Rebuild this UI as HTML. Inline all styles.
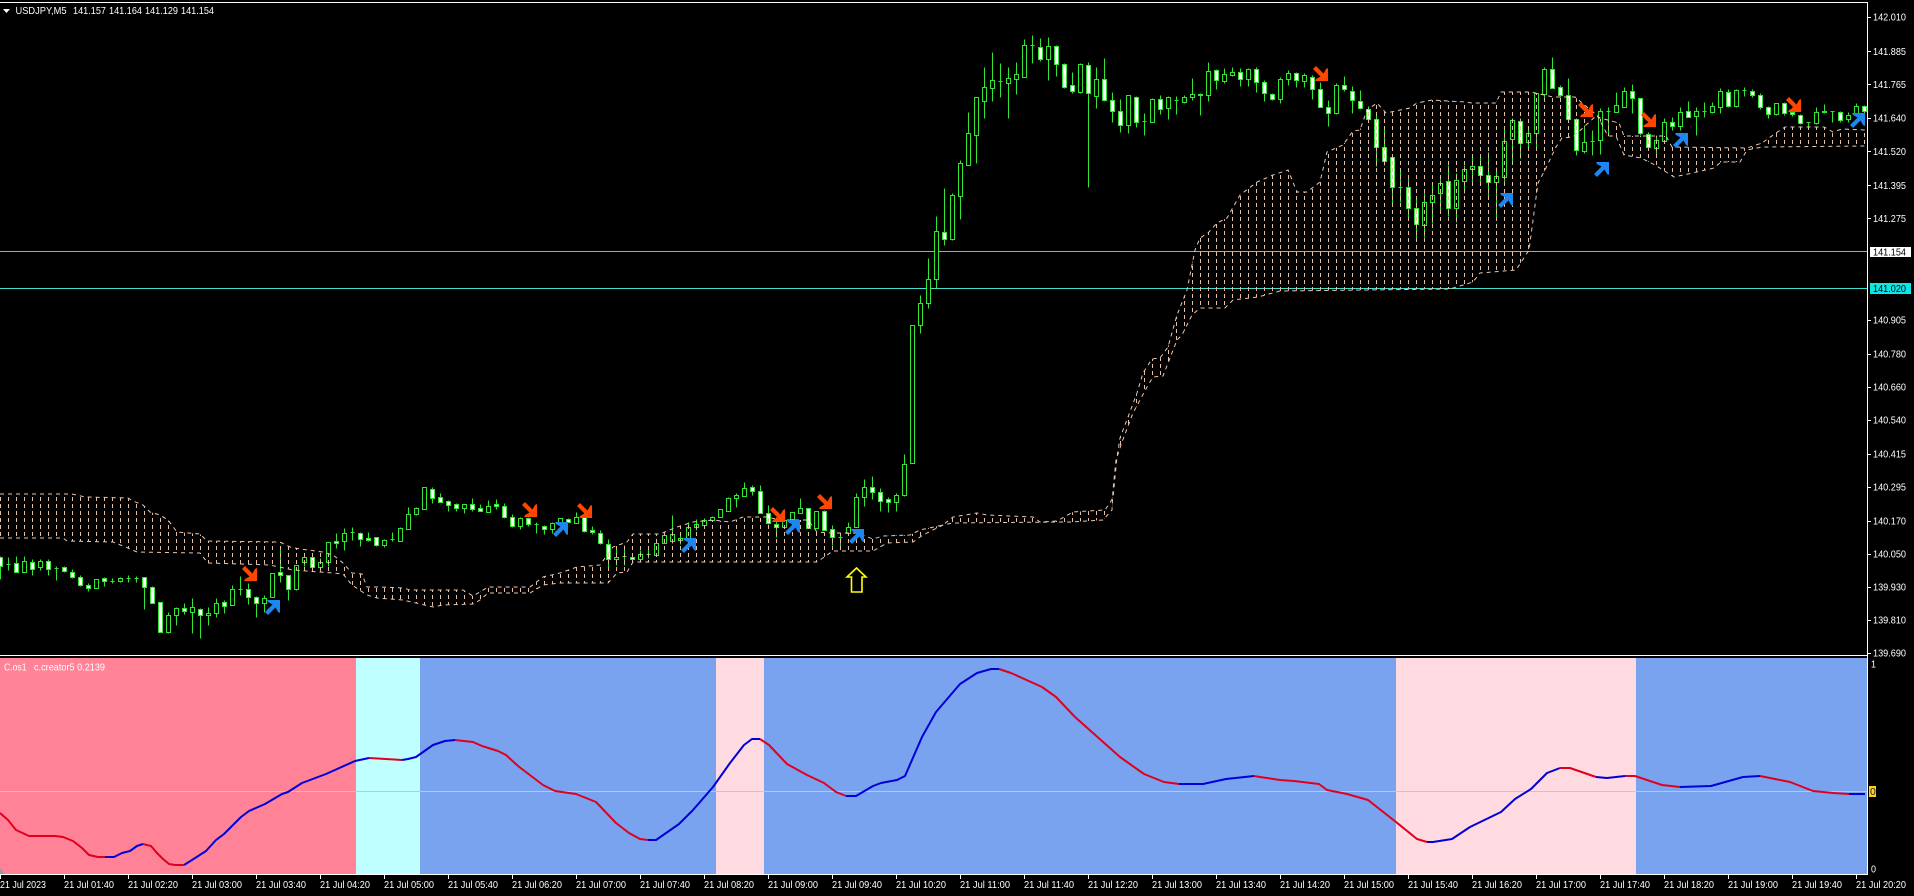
<!DOCTYPE html>
<html><head><meta charset="utf-8"><title>USDJPY,M5</title>
<style>html,body{margin:0;padding:0;background:#000;width:1914px;height:896px;overflow:hidden}svg{display:block}text{font-family:"Liberation Sans",sans-serif;font-size:10.5px;fill:#fff}</style>
</head><body>
<svg width="1914" height="896" viewBox="0 0 1914 896" xmlns="http://www.w3.org/2000/svg">
<defs>
<pattern id="v" width="8" height="7" patternUnits="userSpaceOnUse"><rect x="0" y="0" width="1" height="4" fill="#e6c0a4"/></pattern>
<polygon id="o" fill="#ff4500" points="3,0 10.5,7.5 13,3 15,2 15,15 2,15 3,13 7.5,10.5 0,3"/>
<polygon id="b" fill="#1e86f0" points="3,15 10.5,7.5 13,12 15,13 15,0 2,0 3,2 7.5,4.5 0,12"/>
</defs>
<rect width="1914" height="896" fill="#000"/>
<rect x="0" y="2" width="1868" height="1" fill="#fff"/>
<rect x="0" y="251" width="1867" height="1" fill="#a8a8a8"/>
<rect x="0" y="288" width="1867" height="1" fill="#40e0d0"/>

<g transform="translate(0 .5)">
<path fill="none" stroke="#33e533" stroke-width="1" d="M.5 556V579M8.5 557V570M6.5 564h4M16.5 556V572M24.5 556V572M32.5 559V575M40.5 559V570M48.5 559V575M56.5 566V580M54.5 568h4M64.5 566V572M72.5 569V578M80.5 575V586M88.5 583V591M96.5 579V588M104.5 577V586M112.5 578V583M110.5 581h4M120.5 577V582M128.5 575V582M126.5 578h4M136.5 576V582M134.5 578h4M144.5 577V609M152.5 586V603M160.5 602V632M168.5 612V633M176.5 607V625M184.5 603V614M192.5 598V633M200.5 608V638M208.5 607V625M216.5 598V617M224.5 600V613M232.5 585V605M240.5 576V595M238.5 589h4M248.5 583V604M256.5 596V617M264.5 595V612M272.5 573V597M280.5 548V582M288.5 575V600M296.5 565V590M304.5 553V566M312.5 556V568M320.5 558V572M328.5 542V566M336.5 533V548M344.5 528V550M352.5 527V540M350.5 532h4M360.5 532V546M368.5 532V541M376.5 537V546M384.5 539V547M392.5 532V541M390.5 539h4M400.5 527V541M408.5 507V529M416.5 507V515M424.5 487V509M432.5 487V503M440.5 493V502M448.5 500V511M456.5 503V511M464.5 504V513M472.5 498V511M480.5 504V511M488.5 500V512M496.5 499V509M504.5 503V518M512.5 514V527M520.5 517V529M528.5 517V526M536.5 522V533M534.5 524h4M544.5 525V534M552.5 522V533M560.5 518V523M568.5 518V522M576.5 512V523M584.5 512V532M592.5 526V534M600.5 530V544M608.5 539V568M616.5 548V565M624.5 545V565M622.5 556h4M632.5 556V560M640.5 550V560M648.5 546V558M646.5 554h4M656.5 543V555M664.5 533V543M672.5 515V543M680.5 535V544M688.5 522V540M696.5 519V530M704.5 518V526M712.5 516V521M720.5 509V517M728.5 497V511M736.5 493V507M744.5 482V496M752.5 485V495M760.5 485V513M768.5 505V524M776.5 517V537M784.5 518V527M792.5 512V527M800.5 498V513M808.5 508V528M816.5 511V528M824.5 510V530M832.5 525V545M840.5 533V547M838.5 537h4M848.5 522V534M856.5 493V527M864.5 479V506M872.5 476V499M880.5 488V511M888.5 497V512M896.5 493V511M904.5 454V496M912.5 325V463M920.5 295V333M928.5 258V308M936.5 216V288M944.5 188V245M952.5 193V240M960.5 160V219M968.5 112V165M976.5 97V163M984.5 67V118M992.5 52V101M1000.5 63V97M998.5 81h4M1008.5 67V118M1016.5 62V94M1024.5 39V77M1032.5 35V63M1030.5 45h4M1040.5 38V61M1048.5 37V80M1056.5 45V76M1064.5 63V88M1072.5 72V93M1080.5 63V93M1088.5 62V187M1096.5 67V108M1104.5 58V101M1112.5 92V122M1120.5 99V132M1128.5 96V133M1136.5 96V127M1144.5 113V135M1142.5 121h4M1152.5 98V122M1160.5 95V114M1168.5 96V119M1176.5 96V114M1174.5 100h4M1184.5 95V103M1192.5 78V100M1200.5 93V115M1208.5 62V101M1216.5 69V89M1224.5 68V83M1232.5 67V76M1240.5 68V86M1248.5 68V86M1256.5 67V92M1264.5 80V101M1272.5 93V100M1280.5 77V103M1288.5 70V85M1296.5 72V87M1304.5 73V87M1312.5 75V99M1320.5 82V107M1328.5 100V126M1336.5 83V114M1344.5 76V91M1352.5 86V113M1360.5 90V109M1368.5 106V120M1376.5 115V166M1384.5 129V165M1392.5 157V204M1400.5 168V202M1398.5 187h4M1408.5 175V217M1416.5 198V238M1424.5 192V237M1432.5 185V223M1440.5 175V213M1448.5 165V216M1456.5 173V222M1464.5 165V193M1472.5 157V182M1480.5 156V183M1488.5 152V198M1496.5 167V220M1504.5 128V183M1512.5 118V162M1520.5 118V158M1528.5 129V150M1536.5 93V147M1544.5 67V98M1552.5 57V88M1560.5 85V97M1568.5 78V122M1576.5 118V155M1584.5 125V153M1592.5 130V155M1590.5 141h4M1600.5 108V154M1608.5 107V133M1606.5 111h4M1616.5 92V112M1624.5 87V107M1632.5 84V113M1640.5 98V135M1648.5 132V150M1656.5 135V157M1664.5 118V141M1672.5 117V130M1680.5 107V130M1688.5 101V117M1696.5 107V135M1704.5 102V117M1702.5 111h4M1712.5 102V113M1720.5 88V113M1728.5 89V107M1736.5 89V107M1744.5 87V96M1742.5 90h4M1752.5 89V97M1760.5 93V109M1768.5 106V118M1776.5 103V115M1784.5 102V115M1792.5 107V116M1800.5 114V124M1808.5 122V126M1806.5 122h4M1816.5 107V124M1824.5 104V113M1832.5 111V122M1830.5 111h4M1840.5 111V122M1848.5 112V122M1856.5 103V115M1864.5 105V114"/>
<path fill="#000" stroke="#33e533" stroke-width="1" d="M22.5 561h4v11h-4zM38.5 561h4v6h-4zM94.5 579h4v9h-4zM118.5 578h4v3h-4zM166.5 615h4v17h-4zM174.5 608h4v7h-4zM190.5 607h4v5h-4zM206.5 613h4v2h-4zM214.5 603h4v10h-4zM230.5 589h4v16h-4zM262.5 598h4v5h-4zM270.5 573h4v24h-4zM294.5 565h4v24h-4zM302.5 557h4v5h-4zM318.5 562h4v5h-4zM326.5 542h4v20h-4zM342.5 533h4v8h-4zM382.5 540h4v5h-4zM398.5 528h4v13h-4zM406.5 514h4v15h-4zM414.5 508h4v6h-4zM422.5 487h4v22h-4zM462.5 504h4v4h-4zM486.5 506h4v6h-4zM518.5 518h4v8h-4zM550.5 523h4v6h-4zM558.5 518h4v5h-4zM574.5 517h4v6h-4zM614.5 557h4v2h-4zM638.5 554h4v5h-4zM654.5 543h4v12h-4zM662.5 535h4v8h-4zM670.5 534h4v7h-4zM678.5 538h4v2h-4zM686.5 527h4v11h-4zM694.5 524h4v3h-4zM702.5 520h4v5h-4zM710.5 517h4v3h-4zM718.5 509h4v8h-4zM726.5 498h4v13h-4zM734.5 495h4v3h-4zM742.5 488h4v8h-4zM782.5 520h4v7h-4zM790.5 512h4v7h-4zM798.5 508h4v5h-4zM814.5 511h4v17h-4zM846.5 527h4v6h-4zM854.5 497h4v30h-4zM862.5 487h4v10h-4zM894.5 495h4v7h-4zM902.5 464h4v31h-4zM910.5 325h4v138h-4zM918.5 303h4v22h-4zM926.5 279h4v24h-4zM934.5 231h4v48h-4zM950.5 195h4v44h-4zM958.5 163h4v33h-4zM966.5 133h4v32h-4zM974.5 97h4v38h-4zM982.5 87h4v14h-4zM990.5 80h4v8h-4zM1006.5 78h4v5h-4zM1014.5 74h4v5h-4zM1022.5 45h4v32h-4zM1046.5 46h4v13h-4zM1078.5 64h4v28h-4zM1094.5 79h4v17h-4zM1126.5 95h4v30h-4zM1150.5 99h4v23h-4zM1166.5 97h4v11h-4zM1182.5 97h4v5h-4zM1190.5 94h4v3h-4zM1206.5 71h4v24h-4zM1222.5 74h4v7h-4zM1230.5 72h4v3h-4zM1246.5 69h4v10h-4zM1278.5 79h4v20h-4zM1286.5 73h4v6h-4zM1302.5 75h4v6h-4zM1334.5 85h4v28h-4zM1422.5 202h4v23h-4zM1430.5 195h4v7h-4zM1438.5 183h4v10h-4zM1454.5 180h4v28h-4zM1462.5 169h4v12h-4zM1470.5 166h4v3h-4zM1494.5 176h4v6h-4zM1502.5 141h4v36h-4zM1510.5 120h4v19h-4zM1526.5 133h4v9h-4zM1534.5 93h4v40h-4zM1542.5 69h4v25h-4zM1582.5 142h4v9h-4zM1598.5 111h4v29h-4zM1614.5 105h4v7h-4zM1622.5 91h4v16h-4zM1654.5 140h4v8h-4zM1662.5 122h4v19h-4zM1678.5 112h4v14h-4zM1694.5 111h4v5h-4zM1710.5 106h4v6h-4zM1718.5 91h4v16h-4zM1734.5 90h4v16h-4zM1774.5 103h4v11h-4zM1814.5 112h4v11h-4zM1846.5 115h4v4h-4zM1854.5 106h4v8h-4z"/>
<path fill="#fff" stroke="#33e533" stroke-width="1" d="M-1.5 557h4v9h-4zM14.5 563h4v9h-4zM30.5 562h4v7h-4zM46.5 561h4v8h-4zM62.5 567h4v4h-4zM70.5 572h4v5h-4zM78.5 577h4v8h-4zM86.5 585h4v3h-4zM102.5 578h4v3h-4zM142.5 577h4v10h-4zM150.5 587h4v16h-4zM158.5 602h4v30h-4zM182.5 608h4v3h-4zM198.5 609h4v6h-4zM222.5 602h4v4h-4zM246.5 589h4v8h-4zM254.5 597h4v6h-4zM278.5 572h4v3h-4zM286.5 575h4v14h-4zM310.5 557h4v10h-4zM334.5 541h4v2h-4zM358.5 533h4v6h-4zM366.5 538h4v2h-4zM374.5 537h4v8h-4zM430.5 489h4v9h-4zM438.5 497h4v5h-4zM446.5 501h4v4h-4zM454.5 504h4v4h-4zM470.5 504h4v5h-4zM478.5 508h4v3h-4zM494.5 504h4v2h-4zM502.5 506h4v11h-4zM510.5 517h4v9h-4zM526.5 518h4v6h-4zM542.5 526h4v3h-4zM566.5 519h4v3h-4zM582.5 517h4v14h-4zM590.5 530h4v2h-4zM598.5 533h4v10h-4zM606.5 544h4v15h-4zM630.5 557h4v2h-4zM750.5 487h4v4h-4zM758.5 491h4v22h-4zM766.5 513h4v10h-4zM774.5 524h4v3h-4zM806.5 508h4v20h-4zM822.5 511h4v19h-4zM830.5 529h4v8h-4zM870.5 487h4v5h-4zM878.5 492h4v9h-4zM886.5 499h4v3h-4zM942.5 232h4v7h-4zM1038.5 47h4v12h-4zM1054.5 46h4v18h-4zM1062.5 64h4v23h-4zM1070.5 85h4v6h-4zM1086.5 65h4v28h-4zM1102.5 79h4v21h-4zM1110.5 100h4v11h-4zM1118.5 111h4v14h-4zM1134.5 97h4v25h-4zM1158.5 99h4v10h-4zM1198.5 94h4v1h-4zM1214.5 70h4v10h-4zM1238.5 72h4v7h-4zM1254.5 69h4v13h-4zM1262.5 82h4v11h-4zM1270.5 94h4v5h-4zM1294.5 73h4v7h-4zM1310.5 77h4v12h-4zM1318.5 89h4v18h-4zM1326.5 107h4v6h-4zM1342.5 85h4v4h-4zM1350.5 91h4v9h-4zM1358.5 101h4v7h-4zM1366.5 109h4v10h-4zM1374.5 119h4v28h-4zM1382.5 147h4v14h-4zM1390.5 157h4v30h-4zM1406.5 187h4v21h-4zM1414.5 208h4v16h-4zM1446.5 181h4v27h-4zM1478.5 166h4v9h-4zM1486.5 175h4v7h-4zM1518.5 121h4v22h-4zM1550.5 69h4v19h-4zM1558.5 87h4v8h-4zM1566.5 95h4v24h-4zM1574.5 119h4v31h-4zM1630.5 91h4v7h-4zM1638.5 98h4v35h-4zM1646.5 134h4v13h-4zM1670.5 122h4v4h-4zM1686.5 111h4v6h-4zM1726.5 92h4v14h-4zM1750.5 91h4v4h-4zM1758.5 95h4v12h-4zM1766.5 107h4v7h-4zM1782.5 103h4v10h-4zM1790.5 112h4v2h-4zM1798.5 115h4v8h-4zM1822.5 111h4v1h-4zM1838.5 112h4v8h-4zM1862.5 106h4v5h-4z"/>
</g>

<polygon fill="url(#v)" points="0,494 72,494 85,497 128,498 133,501 143,505 150,512 160,515 168,520 177,532 200,534 207,541 280,542 290,547 300,549 323,552 333,555 343,563 352,573 362,574 367,587 380,587 403,588 410,590 463,590 473,596 480,592 488,587 530,587 543,577 560,573 577,567 600,565 613,547 627,542 633,534 660,534 677,527 693,522 713,520 730,522 743,517 767,517 780,520 808,520 817,532 830,533 857,533 873,539 883,536 910,535 920,530 943,525 953,517 977,513 987,515 1033,517 1040,522 1057,521 1073,512 1105,510 1113,498 1115,477 1117,457 1120,438 1128,417 1137,393 1143,373 1152,359 1160,358 1168,347 1177,315 1187,290 1195,250 1200,238 1208,233 1217,223 1227,218 1240,195 1257,182 1273,175 1288,170 1297,192 1307,192 1320,182 1327,152 1343,145 1353,131 1360,130 1367,110 1377,103 1386,113 1410,108 1417,103 1432,100 1465,102 1472,103 1496,103 1501,92 1531,92 1553,97 1575,97 1593,112 1600,118 1619,123 1624,136 1666,136 1672,147 1747,148 1762,143 1776,133 1785,127 1824,127 1833,132 1842,129 1866,130 1866,146 1762,147 1747,150 1740,162 1721,162 1714,168 1688,174 1674,177 1655,165 1641,158 1624,155 1616,136 1608,136 1597,115 1573,137 1562,138 1556,147 1545,170 1538,183 1529,250 1516,270 1480,273 1473,282 1450,289 1280,291 1258,297 1233,300 1225,308 1200,308 1192,315 1182,335 1177,340 1163,376 1153,377 1147,387 1133,413 1122,442 1116,460 1113,490 1112,510 1103,520 1072,522 1060,522 953,523 943,525 923,535 913,542 887,543 873,551 833,551 817,562 633,562 627,572 617,573 608,583 560,583 543,585 530,593 488,593 480,600 473,604 443,605 433,607 403,600 377,598 367,595 352,585 343,574 333,573 293,570 270,565 208,563 200,553 137,552 128,548 113,542 67,541 63,538 0,538"/>
<g fill="none" stroke="#e8c8b4" stroke-width="1" stroke-dasharray="4 4">
<polyline points="0,494 72,494 85,497 128,498 133,501 143,505 150,512 160,515 168,520 177,532 200,534 207,541 280,542 290,547 300,549 323,552 333,555 343,563 352,573 362,574 367,587 380,587 403,588 410,590 463,590 473,596 480,592 488,587 530,587 543,577 560,573 577,567 600,565 613,547 627,542 633,534 660,534 677,527 693,522 713,520 730,522 743,517 767,517 780,520 808,520 817,532 830,533 857,533 873,539 883,536 910,535 920,530 943,525 953,517 977,513 987,515 1033,517 1040,522 1057,521 1073,512 1105,510 1113,498 1115,477 1117,457 1120,438 1128,417 1137,393 1143,373 1152,359 1160,358 1168,347 1177,315 1187,290 1195,250 1200,238 1208,233 1217,223 1227,218 1240,195 1257,182 1273,175 1288,170 1297,192 1307,192 1320,182 1327,152 1343,145 1353,131 1360,130 1367,110 1377,103 1386,113 1410,108 1417,103 1432,100 1465,102 1472,103 1496,103 1501,92 1531,92 1553,97 1575,97 1593,112 1600,118 1619,123 1624,136 1666,136 1672,147 1747,148 1762,143 1776,133 1785,127 1824,127 1833,132 1842,129 1866,130"/>
<polyline points="0,538 63,538 67,541 113,542 128,548 137,552 200,553 208,563 270,565 293,570 333,573 343,574 352,585 367,595 377,598 403,600 433,607 443,605 473,604 480,600 488,593 530,593 543,585 560,583 608,583 617,573 627,572 633,562 817,562 833,551 873,551 887,543 913,542 923,535 943,525 953,523 1060,522 1072,522 1103,520 1112,510 1113,490 1116,460 1122,442 1133,413 1147,387 1153,377 1163,376 1177,340 1182,335 1192,315 1200,308 1225,308 1233,300 1258,297 1280,291 1450,289 1473,282 1480,273 1516,270 1529,250 1538,183 1545,170 1556,147 1562,138 1573,137 1597,115 1608,136 1616,136 1624,155 1641,158 1655,165 1674,177 1688,174 1714,168 1721,162 1740,162 1747,150 1762,147 1866,146"/>
</g>

<use href="#o" x="242" y="566"/><use href="#o" x="522" y="502"/><use href="#o" x="577" y="503"/><use href="#o" x="770" y="507"/><use href="#o" x="817" y="494"/><use href="#o" x="1313" y="66"/><use href="#o" x="1578" y="102"/><use href="#o" x="1641" y="112"/><use href="#o" x="1786" y="97"/>
<use href="#b" x="265" y="600"/><use href="#b" x="553" y="522"/><use href="#b" x="681" y="538"/><use href="#b" x="785" y="520"/><use href="#b" x="849" y="529"/><use href="#b" x="1498" y="193"/><use href="#b" x="1594" y="162"/><use href="#b" x="1673" y="133"/><use href="#b" x="1850" y="113"/>
<path d="M856.5 568L847 577H851.5V592H862V577H866Z" fill="none" stroke="#ffff00" stroke-width="1.6"/>

<polygon points="3,9 10,9 6.5,13" fill="#fff"/>
<text x="15.5" y="14" textLength="51" lengthAdjust="spacingAndGlyphs">USDJPY,M5</text>
<text x="73" y="14" textLength="33" lengthAdjust="spacingAndGlyphs">141.157</text>
<text x="109" y="14" textLength="33" lengthAdjust="spacingAndGlyphs">141.164</text>
<text x="145" y="14" textLength="33" lengthAdjust="spacingAndGlyphs">141.129</text>
<text x="181" y="14" textLength="33" lengthAdjust="spacingAndGlyphs">141.154</text>

<rect x="0" y="655" width="1868" height="1" fill="#fff"/>
<rect x="0" y="658" width="356" height="216" fill="#ff8297"/>
<rect x="356" y="658" width="64" height="216" fill="#bfffff"/>
<rect x="420" y="658" width="296" height="216" fill="#7aa3ef"/>
<rect x="716" y="658" width="48" height="216" fill="#ffdae0"/>
<rect x="764" y="658" width="632" height="216" fill="#7aa3ef"/>
<rect x="1396" y="658" width="240" height="216" fill="#ffdae0"/>
<rect x="1636" y="658" width="231" height="216" fill="#7aa3ef"/>
<rect x="0" y="791" width="1867" height="1" fill="#ffc62e"/>
<polygon points="0,868 5,874 0,874" fill="#9a9a9a"/>
<text x="4" y="670.5" textLength="22.5" lengthAdjust="spacingAndGlyphs">C.os1</text>
<text x="34" y="670.5" textLength="71" lengthAdjust="spacingAndGlyphs">c.creator5 0.2139</text>

<path fill="none" stroke="#e0001e" stroke-width="2" stroke-linejoin="round" d="M0 813L8 820 16 830 29 836 55 836 63 837 73 841 82 848 89 855 98 857 105 857M143 844L151 846 157 853 163 859 169 864 175 865 184 865M369 758L386 759 402 760M455 740L473 742 482 746 498 751 506 755 518 766 543 785 555 791 576 794 596 802 616 823 629 833 640 839 648 840M760 739L769 745 787 764 807 775 824 783 836 792 846 796M999 669L1011 673 1042 687 1056 697 1075 717 1093 733 1120 757 1144 774 1164 782 1179 784M1254 776L1260 777 1280 780 1294 781 1319 784 1327 790 1347 794 1368 800 1396 822 1417 839 1427 842M1560 768L1570 768 1596 777M1625 776L1635 776 1662 785 1680 787M1760 776L1790 782 1813 791 1833 793 1849 794"/>
<path fill="none" stroke="#0000d8" stroke-width="2" stroke-linejoin="round" d="M105 857L114 857 122 853 130 851 137 846 143 844M184 865L192 860 206 851 216 840 224 834 241 817 249 811 265 804 282 794 288 792 302 783 326 774 355 761 369 758M402 760L408 759 416 757 433 745 445 741 455 740M648 840L656 840 679 824 693 810 713 787 730 763 744 745 752 739 760 739M846 796L856 796 873 786 881 783 897 780 905 776 922 737 936 712 960 684 977 673 991 669 999 669M1179 784L1203 784 1226 779 1254 776M1427 842L1433 842 1452 839 1470 827 1501 812 1515 799 1531 789 1547 773 1560 768M1596 777L1607 778 1625 776M1680 787L1711 786 1743 777 1760 776M1849 794L1865 794"/>

<rect x="1867" y="2" width="1" height="873" fill="#fff"/>
<rect x="0" y="874" width="1868" height="1" fill="#fff"/>

<g fill="#fff">
<rect x="1868" y="17" width="3" height="1"/><rect x="1868" y="51" width="3" height="1"/><rect x="1868" y="84" width="3" height="1"/><rect x="1868" y="118" width="3" height="1"/><rect x="1868" y="151" width="3" height="1"/><rect x="1868" y="185" width="3" height="1"/><rect x="1868" y="218" width="3" height="1"/><rect x="1868" y="320" width="3" height="1"/><rect x="1868" y="354" width="3" height="1"/><rect x="1868" y="387" width="3" height="1"/><rect x="1868" y="420" width="3" height="1"/><rect x="1868" y="454" width="3" height="1"/><rect x="1868" y="487" width="3" height="1"/><rect x="1868" y="521" width="3" height="1"/><rect x="1868" y="554" width="3" height="1"/><rect x="1868" y="587" width="3" height="1"/><rect x="1868" y="620" width="3" height="1"/><rect x="1868" y="653" width="3" height="1"/>
</g>
<g>
<text x="1873" y="20.5" textLength="33" lengthAdjust="spacingAndGlyphs">142.010</text>
<text x="1873" y="55" textLength="33" lengthAdjust="spacingAndGlyphs">141.885</text>
<text x="1873" y="88" textLength="33" lengthAdjust="spacingAndGlyphs">141.765</text>
<text x="1873" y="121.5" textLength="33" lengthAdjust="spacingAndGlyphs">141.640</text>
<text x="1873" y="155" textLength="33" lengthAdjust="spacingAndGlyphs">141.520</text>
<text x="1873" y="189" textLength="33" lengthAdjust="spacingAndGlyphs">141.395</text>
<text x="1873" y="222" textLength="33" lengthAdjust="spacingAndGlyphs">141.275</text>
<rect x="1870" y="247" width="41" height="10" fill="#fff"/>
<text x="1873" y="255.5" textLength="33" lengthAdjust="spacingAndGlyphs" style="fill:#000">141.154</text>
<rect x="1870" y="283" width="41" height="11" fill="#0be6e6"/>
<text x="1873" y="292" textLength="33" lengthAdjust="spacingAndGlyphs" style="fill:#000">141.020</text>
<text x="1873" y="323.5" textLength="33" lengthAdjust="spacingAndGlyphs">140.905</text>
<text x="1873" y="357.5" textLength="33" lengthAdjust="spacingAndGlyphs">140.780</text>
<text x="1873" y="390.5" textLength="33" lengthAdjust="spacingAndGlyphs">140.660</text>
<text x="1873" y="423.5" textLength="33" lengthAdjust="spacingAndGlyphs">140.540</text>
<text x="1873" y="457.5" textLength="33" lengthAdjust="spacingAndGlyphs">140.415</text>
<text x="1873" y="490.5" textLength="33" lengthAdjust="spacingAndGlyphs">140.295</text>
<text x="1873" y="524.5" textLength="33" lengthAdjust="spacingAndGlyphs">140.170</text>
<text x="1873" y="557.5" textLength="33" lengthAdjust="spacingAndGlyphs">140.050</text>
<text x="1873" y="590.5" textLength="33" lengthAdjust="spacingAndGlyphs">139.930</text>
<text x="1873" y="623.5" textLength="33" lengthAdjust="spacingAndGlyphs">139.810</text>
<text x="1873" y="656.5" textLength="33" lengthAdjust="spacingAndGlyphs">139.690</text>
<text x="1871" y="667.5" textLength="5" lengthAdjust="spacingAndGlyphs">1</text>
<rect x="1869" y="786" width="7" height="11" fill="#ffd21e"/>
<text x="1870" y="795" style="fill:#222">0</text>
<text x="1871" y="872.5" textLength="5" lengthAdjust="spacingAndGlyphs">0</text>
</g>

<path stroke="#fff" stroke-width="1" fill="none" d="M.5 875V879M64.5 875V879M128.5 875V879M192.5 875V879M256.5 875V879M320.5 875V879M384.5 875V879M448.5 875V879M512.5 875V879M576.5 875V879M640.5 875V879M704.5 875V879M768.5 875V879M832.5 875V879M896.5 875V879M960.5 875V879M1024.5 875V879M1088.5 875V879M1152.5 875V879M1216.5 875V879M1280.5 875V879M1344.5 875V879M1408.5 875V879M1472.5 875V879M1536.5 875V879M1600.5 875V879M1664.5 875V879M1728.5 875V879M1792.5 875V879M1856.5 875V879"/>
<g>
<text x="0" y="888" textLength="46" lengthAdjust="spacingAndGlyphs">21 Jul 2023</text>
<text x="64" y="888" textLength="50" lengthAdjust="spacingAndGlyphs">21 Jul 01:40</text>
<text x="128" y="888" textLength="50" lengthAdjust="spacingAndGlyphs">21 Jul 02:20</text>
<text x="192" y="888" textLength="50" lengthAdjust="spacingAndGlyphs">21 Jul 03:00</text>
<text x="256" y="888" textLength="50" lengthAdjust="spacingAndGlyphs">21 Jul 03:40</text>
<text x="320" y="888" textLength="50" lengthAdjust="spacingAndGlyphs">21 Jul 04:20</text>
<text x="384" y="888" textLength="50" lengthAdjust="spacingAndGlyphs">21 Jul 05:00</text>
<text x="448" y="888" textLength="50" lengthAdjust="spacingAndGlyphs">21 Jul 05:40</text>
<text x="512" y="888" textLength="50" lengthAdjust="spacingAndGlyphs">21 Jul 06:20</text>
<text x="576" y="888" textLength="50" lengthAdjust="spacingAndGlyphs">21 Jul 07:00</text>
<text x="640" y="888" textLength="50" lengthAdjust="spacingAndGlyphs">21 Jul 07:40</text>
<text x="704" y="888" textLength="50" lengthAdjust="spacingAndGlyphs">21 Jul 08:20</text>
<text x="768" y="888" textLength="50" lengthAdjust="spacingAndGlyphs">21 Jul 09:00</text>
<text x="832" y="888" textLength="50" lengthAdjust="spacingAndGlyphs">21 Jul 09:40</text>
<text x="896" y="888" textLength="50" lengthAdjust="spacingAndGlyphs">21 Jul 10:20</text>
<text x="960" y="888" textLength="50" lengthAdjust="spacingAndGlyphs">21 Jul 11:00</text>
<text x="1024" y="888" textLength="50" lengthAdjust="spacingAndGlyphs">21 Jul 11:40</text>
<text x="1088" y="888" textLength="50" lengthAdjust="spacingAndGlyphs">21 Jul 12:20</text>
<text x="1152" y="888" textLength="50" lengthAdjust="spacingAndGlyphs">21 Jul 13:00</text>
<text x="1216" y="888" textLength="50" lengthAdjust="spacingAndGlyphs">21 Jul 13:40</text>
<text x="1280" y="888" textLength="50" lengthAdjust="spacingAndGlyphs">21 Jul 14:20</text>
<text x="1344" y="888" textLength="50" lengthAdjust="spacingAndGlyphs">21 Jul 15:00</text>
<text x="1408" y="888" textLength="50" lengthAdjust="spacingAndGlyphs">21 Jul 15:40</text>
<text x="1472" y="888" textLength="50" lengthAdjust="spacingAndGlyphs">21 Jul 16:20</text>
<text x="1536" y="888" textLength="50" lengthAdjust="spacingAndGlyphs">21 Jul 17:00</text>
<text x="1600" y="888" textLength="50" lengthAdjust="spacingAndGlyphs">21 Jul 17:40</text>
<text x="1664" y="888" textLength="50" lengthAdjust="spacingAndGlyphs">21 Jul 18:20</text>
<text x="1728" y="888" textLength="50" lengthAdjust="spacingAndGlyphs">21 Jul 19:00</text>
<text x="1792" y="888" textLength="50" lengthAdjust="spacingAndGlyphs">21 Jul 19:40</text>
<text x="1856" y="888" textLength="50" lengthAdjust="spacingAndGlyphs">21 Jul 20:20</text>
</g>
</svg>
</body></html>
